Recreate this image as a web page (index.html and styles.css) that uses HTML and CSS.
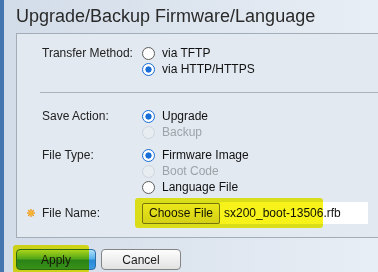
FILE: index.html
```html
<!DOCTYPE html>
<html lang="en">
<head>
    <meta charset="UTF-8">
    <title>Upgrade/Backup Firmware/Language</title>
    <link rel="stylesheet" href="styles.css">
</head>
<body>
    <div class="page">
        <h1 class="title">Upgrade/Backup Firmware/Language</h1>

        <form class="panel">
            <div class="group">
                <div class="field-label">Transfer Method:</div>
                <div class="options">
                    <label class="option"><input type="radio" name="transfer"> via TFTP</label>
                    <label class="option"><input type="radio" name="transfer" checked> via HTTP/HTTPS</label>
                </div>
            </div>

            <hr class="divider">

            <div class="group">
                <div class="field-label">Save Action:</div>
                <div class="options">
                    <label class="option"><input type="radio" name="action" checked> Upgrade</label>
                    <label class="option disabled"><input type="radio" name="action" disabled> Backup</label>
                </div>
            </div>

            <div class="group">
                <div class="field-label">File Type:</div>
                <div class="options">
                    <label class="option"><input type="radio" name="type" checked> Firmware Image</label>
                    <label class="option disabled"><input type="radio" name="type" disabled> Boot Code</label>
                    <label class="option"><input type="radio" name="type"> Language File</label>
                </div>
            </div>

            <div class="group file-row">
                <div class="field-label">
                    <svg class="req" width="8" height="8" viewBox="0 0 8 8">
                        <g stroke="#f09a1c" stroke-width="1.4" stroke-linecap="round">
                            <line x1="4" y1="0.6" x2="4" y2="7.4"/>
                            <line x1="0.6" y1="4" x2="7.4" y2="4"/>
                            <line x1="1.6" y1="1.6" x2="6.4" y2="6.4"/>
                            <line x1="6.4" y1="1.6" x2="1.6" y2="6.4"/>
                        </g>
                        <circle cx="4" cy="4" r="1.9" fill="#f7b733"/>
                    </svg>
                    File Name:
                </div>
                <div class="file-field">
                    <button type="button" class="choose">Choose File</button>
                    <span class="file-name">sx200_boot-13506.rfb</span>
                    <span class="highlight file-mark"></span>
                </div>
            </div>
        </form>

        <div class="actions">
            <span class="btn-wrap">
                <button class="btn apply">Apply</button>
                <span class="highlight apply-mark"></span>
            </span>
            <button class="btn cancel">Cancel</button>
        </div>
    </div>
</body>
</html>
```

FILE: styles.css
```css
html, body {
    height: 100%;
}

body {
    margin: 0;
    font-family: "Liberation Sans", Arial, sans-serif;
    font-size: 12px;
    color: #1e1e1e;
    background: linear-gradient(to right, #d2dce8, #e8eef5);
    border-left: 4px solid #4676b0;
    overflow: hidden;
}

.page {
    padding-left: 12px;
}

.title {
    margin: 0;
    padding-top: 6px;
    font-size: 18px;
    line-height: 21px;
    font-weight: normal;
    color: #2a2a2a;
}

.panel {
    margin-top: 6px;
    padding: 11px 0 13px 25px;
    background-color: #e2e9f1;
    border: 1px solid #a3adb8;
    border-right: none;
}

.group {
    display: flex;
    margin-bottom: 7px;
}

.group:last-child {
    margin-bottom: 0;
}

.field-label {
    width: 100px;
    line-height: 16px;
    color: #222;
}

.options {
    display: flex;
    flex-direction: column;
}

.option {
    display: flex;
    align-items: center;
    height: 16px;
    color: #111;
}

.option input {
    appearance: none;
    -webkit-appearance: none;
    box-sizing: border-box;
    width: 13px;
    height: 13px;
    margin: 0 7px 0 0;
    border: 1px solid #5c5c5c;
    border-radius: 50%;
    background: #fff;
}

.option input:checked {
    border: 1.5px solid #1a6ed8;
    background: radial-gradient(circle, #1a6ed8 0 2.8px, #fff 3.4px);
}

.option.disabled {
    color: #9ea3a9;
}

.option input:disabled {
    border-color: #cfd5dc;
    background: #e8edf2;
}

.divider {
    margin: 15px 0 15px -2px;
    height: 0;
    border: none;
    border-top: 1px solid #aab3bd;
}

.file-row {
    align-items: center;
    height: 22px;
}

.file-row .field-label {
    display: flex;
    align-items: center;
}

.req {
    margin-left: -15px;
    margin-right: 7px;
}

.file-field {
    position: relative;
    display: flex;
    align-items: center;
    width: 226px;
    height: 21px;
}

.choose {
    box-sizing: border-box;
    width: 78px;
    height: 21px;
    padding: 0;
    font-family: inherit;
    font-size: 12px;
    color: #111;
    background: linear-gradient(#f4f4f4, #dcdcdc);
    border: 1px solid #7b7b7b;
    border-radius: 2px;
}

.file-name {
    flex: 1;
    height: 22px;
    line-height: 22px;
    padding-left: 4px;
    background-color: #fff;
    color: #111;
}

/* highlighter marks drawn over the screenshot */
.highlight {
    position: absolute;
    background-color: #f6f21a;
    mix-blend-mode: multiply;
    border-radius: 3px;
    pointer-events: none;
}

.file-mark {
    left: -7px;
    top: -5px;
    width: 188px;
    height: 30px;
}

.actions {
    display: flex;
    gap: 5px;
    margin-top: 11px;
}

.btn-wrap {
    position: relative;
    display: flex;
}

.btn {
    box-sizing: border-box;
    width: 80px;
    height: 21px;
    padding: 0;
    font-family: inherit;
    font-size: 12px;
    border-radius: 4px;
}

.apply {
    color: #1a1a1a;
    background: linear-gradient(#b2e0fa, #58b2ee 45%, #2a8ad8 55%, #3c9ae2);
    border: 1px solid #2b6ea6;
}

.cancel {
    color: #1a1a1a;
    background: linear-gradient(#fdfdfd, #e2e2e2);
    border: 1px solid #858585;
}

.apply-mark {
    left: -3px;
    top: -4px;
    width: 76px;
    height: 28px;
}
```
